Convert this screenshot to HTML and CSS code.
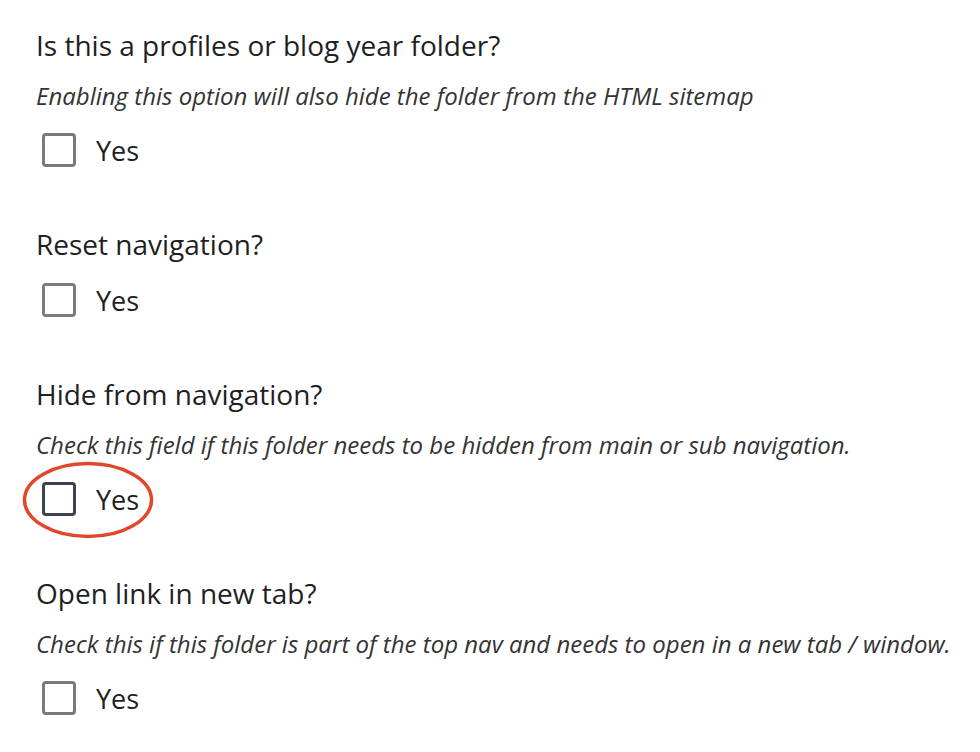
FILE: index.html
```html
<!DOCTYPE html>
<html lang="en">
<head>
  <meta charset="UTF-8">
  <title>Folder settings</title>
  <link rel="stylesheet" href="styles.css">
</head>
<body>
  <form class="settings">
    <div class="field">
      <div class="field-label">Is this a profiles or blog year folder?</div>
      <div class="field-help">Enabling this option will also hide the folder from the HTML sitemap</div>
      <label class="check"><input type="checkbox" name="isYearFolder"><span class="box"></span>Yes</label>
    </div>

    <div class="field">
      <div class="field-label">Reset navigation?</div>
      <label class="check"><input type="checkbox" name="resetNav"><span class="box"></span>Yes</label>
    </div>

    <div class="field">
      <div class="field-label">Hide from navigation?</div>
      <div class="field-help">Check this field if this folder needs to be hidden from main or sub navigation.</div>
      <label class="check is-hover">
        <input type="checkbox" name="hideFromNav"><span class="box"></span>Yes
        <!-- highlight ring -->
        <svg class="ring" width="134" height="80" viewBox="0 0 134 80">
          <ellipse cx="67" cy="40" rx="63.5" ry="36.5" fill="none" stroke="#e0472b" stroke-width="3.5"/>
        </svg>
      </label>
    </div>

    <div class="field">
      <div class="field-label">Open link in new tab?</div>
      <div class="field-help">Check this if this folder is part of the top nav and needs to open in a new tab / window.</div>
      <label class="check"><input type="checkbox" name="newTab"><span class="box"></span>Yes</label>
    </div>
  </form>
</body>
</html>
```

FILE: styles.css
```css
body {
  margin: 0;
  background: #fff;
  font-family: "Open Sans", sans-serif;
  color: #1f1f1f;
}
.settings {
  display: flex;
  flex-direction: column;
  gap: 56px;
  padding: 27px 0 0 36px;
}
.field {
  display: flex;
  flex-direction: column;
}
.field-label {
  font-size: 28px;
  line-height: 36px;
}
.field-help {
  margin-top: 17px;
  font-size: 24px;
  line-height: 32px;
  font-style: italic;
  color: #333;
}
.check {
  position: relative;
  display: flex;
  align-items: center;
  gap: 20px;
  margin-top: 18px;
  padding-left: 6px;
  height: 40px;
  font-size: 27px;
  cursor: pointer;
}
.check input {
  display: none;
}
.box {
  width: 28px;
  height: 28px;
  border: 3px solid #7a7a7a;
  border-radius: 4px;
}
.check.is-hover .box {
  border-color: #3c4252;
}
.ring {
  position: absolute;
  left: -15px;
  top: -19px;
}
```
